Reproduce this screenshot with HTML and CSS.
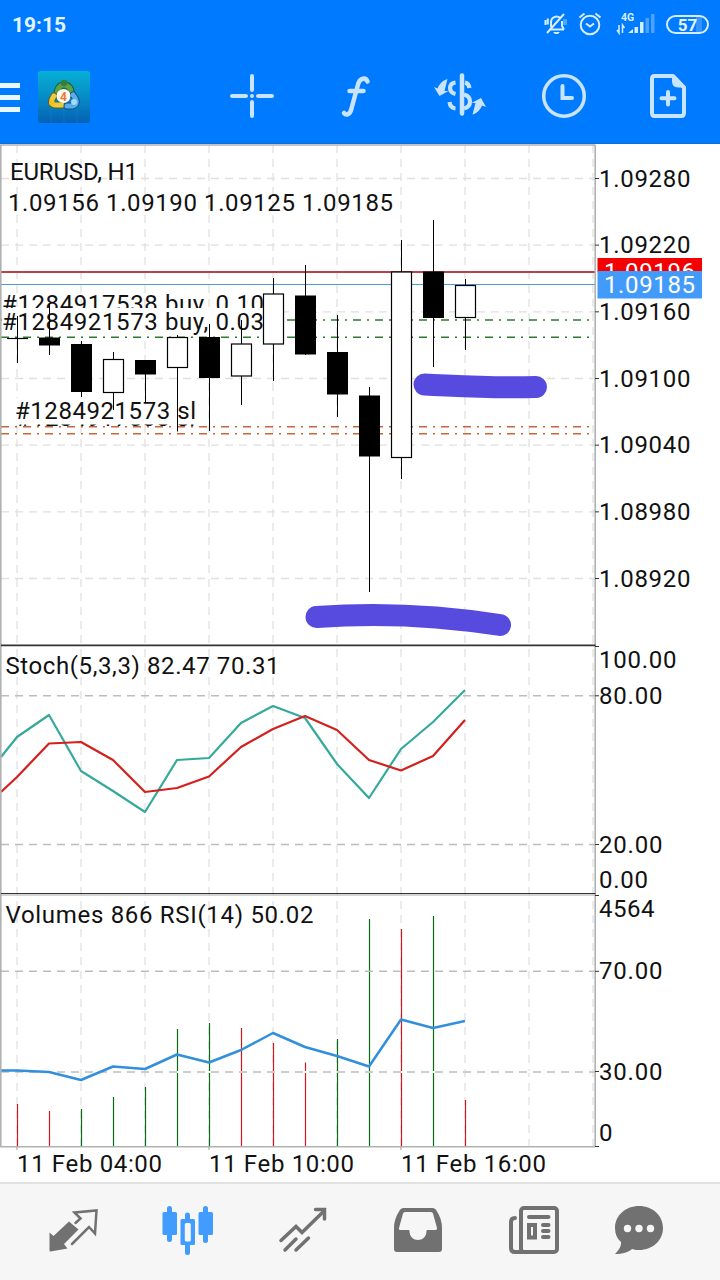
FILE: index.html
```html
<!DOCTYPE html>
<html lang="en">
  <head>
    <meta charset="utf-8">
    <title>EURUSD, H1</title>
    <link rel="stylesheet" href="styles.css">
  </head>
  <body>
    <div class="app">
      <header class="header">
        <div class="status-bar">
          <span class="time">19:15</span>
          <div class="status-icons">
            <svg class="bell" width="24" height="24" viewBox="0 0 24 24">
              <path d="M5 17.5h15M7 15V10a5.5 5.5 0 0 1 9-4.200M18 9v5l2 3.500M3 21L20 2M1.500 8v5M3.800 6.500v6"/>
              <path class="solid" d="M9 20h7l-2 2h-3z"/>
              <path class="faint" d="M19 7h4v6h-4z"/>
            </svg>
            <svg class="alarm" width="24" height="24" viewBox="0 0 24 24">
              <circle cx="12" cy="13" r="9.300"/>
              <path d="M8 11.500l4 3 4-3M1.500 5.500l5-4M22.500 5.500l-5-4"/>
            </svg>
            <svg class="signal" width="40" height="24" viewBox="0 0 40 24">
              <text x="5" y="9.300">4G</text>
              <path class="arrows" d="M3 13v8l-2-3M6.500 21v-8l2 3"/>
              <path class="solid" d="M12 21l5-4v4zM18.500 15h3.500v6h-3.500zM24 10h3.500v11h-3.500z"/>
              <path class="faint" d="M29.500 6h3.500v15h-3.500zM35 2h3.500v19h-3.500z"/>
            </svg>
            <span class="battery">57</span>
          </div>
        </div>

        <div class="toolbar">
          <div class="menu"><i></i><i></i><i></i></div>
          <svg class="logo" width="52" height="52" viewBox="0 0 52 52">
            <defs>
              <linearGradient id="tile" x1="0" y1="0" x2="0" y2="1">
                <stop offset="0" stop-color="#05b0d5"/>
                <stop offset="0.5" stop-color="#078bc6"/>
                <stop offset="1" stop-color="#0461b4"/>
              </linearGradient>
            </defs>
            <rect width="52" height="52" rx="3" fill="url(#tile)"/>
            <path d="M13 0v52M26 0v52M39 0v52M0 17h52M0 34h52" stroke="#2aa0d8" stroke-opacity=".2"/>
            <g fill="none" stroke-linecap="round">
              <path d="M19 24c0-7 3-10 7-10s7 3 8 10" stroke="#17612f" stroke-width="7"/>
              <path d="M19 24c0-7 3-10 7-10s7 3 8 10" stroke="#5ba04a" stroke-width="5"/>
              <path d="M16 25c-4 6-3 9 2 9h6" stroke="#695e1b" stroke-width="7"/>
              <path d="M16 25c-4 6-3 9 2 9h6" stroke="#e2cd43" stroke-width="5"/>
              <path d="M35 24c5 6 4 10-1 11h-5" stroke="#155287" stroke-width="7"/>
              <path d="M35 24c5 6 4 10-1 11h-5" stroke="#5aaee8" stroke-width="5"/>
            </g>
            <circle cx="26" cy="12" r="3.200" fill="#34803a"/>
            <circle cx="14" cy="32" r="2.800" fill="#f3c11d"/>
            <circle cx="36" cy="31" r="3" fill="#a3daf8"/>
            <circle cx="25.500" cy="25" r="7" fill="#fff6ed"/>
            <text x="25.500" y="29.500" text-anchor="middle">4</text>
          </svg>
          <div class="tools">
            <svg width="52" height="52" viewBox="0 0 52 52">
              <path d="M26 6v14M26 32v14M6 26h14M32 26h14" stroke-width="4"/>
              <circle class="solid" cx="26" cy="26" r="2"/>
            </svg>
            <svg width="52" height="52" viewBox="0 0 52 52">
              <path d="M38.500 11.500c-1.500-4-7.500-4.500-9.500 3l-6.500 24c-1.500 6.500-5.500 7-7.500 4.500M20.500 21h14" stroke-width="4.500"/>
            </svg>
            <svg width="56" height="52" viewBox="0 0 56 52">
              <path d="M30 5.500v38" stroke-width="4.500"/>
              <path d="M23.500 12.500c-7 1-7.500 9.500 0 11.500M17.500 32c.5 4 2.500 6.200 6 6.500M33 12.500c2.500.5 4 2.500 4.500 5.500M32 24.500c8 2 8 12 0 14" stroke-width="4.200" stroke-linecap="butt"/>
              <path class="solid" d="M15.500 9l-3 12h4l-9 5-5.500-9 3.500 1.500c1.500-4 5-8 10-9.500zM40.500 44.500l3-11.500h-4l9.500-5 5 9-4-1.500c-1.500 4-5 8-9.500 9z"/>
            </svg>
            <svg width="52" height="52" viewBox="0 0 52 52">
              <circle cx="25" cy="26" r="20.300" stroke-width="3.500"/>
              <path d="M23.500 16v12h9.500" stroke-width="4"/>
            </svg>
            <svg width="52" height="52" viewBox="0 0 52 52">
              <path d="M12.500 6h18.500l11 11.500v25.500q0 3-3 3h-26.500q-2.500 0-2.500-3V9q0-3 2.500-3z" stroke-width="4" stroke-linejoin="round"/>
              <path class="solid" d="M30 5v6q0 6.500 6 6.500h7z"/>
              <path d="M26 22v12.500M19.500 28.300h13" stroke-width="4"/>
            </svg>
          </div>
        </div>
      </header>

      <main class="chart">
        <svg id="chart" width="720" height="1038" viewBox="0 144 720 1038">
          <g id="grid"></g>

          <!-- price lines -->
          <path d="M1 272H595" stroke="#b94248" stroke-width="2"/>
          <path d="M1 284.500H595" stroke="#4b9bdc" stroke-width="1.200"/>
          <g class="orders">
            <path d="M1 320H595M1 337.300H595" stroke="#2c7a30"/>
            <path d="M1 426.800H595M1 433.700H595" stroke="#c4683c"/>
          </g>

          <g class="labels">
            <text x="2" y="311.500" textLength="262">#1284917538 buy, 0.10</text>
            <rect x="2" y="308" width="262" height="28"/>
            <text x="2" y="330" textLength="262">#1284921573 buy, 0.03</text>
            <text x="16" y="425.500" textLength="179">#1284917538 sl</text>
            <rect x="14" y="398" width="182" height="26.500"/>
            <text x="15" y="419" textLength="181">#1284921573 sl</text>
          </g>

          <g id="candles"></g>

          <!-- highlights -->
          <g class="marker">
            <path d="M424.500 384.500C460 386 490 388.500 536 387"/>
            <path d="M316.500 617C370 613 430 614 500 625"/>
          </g>

          <!-- oscillators -->
          <polyline class="line" stroke="#35a99c" points="1,757 17,737 49,715 81,771 113,791 145,812 177,760 209,758 241,723 273,706 305,718 337,764 369,798 401,749 433,722 465,690"/>
          <polyline class="line" stroke="#d3201c" points="1,792 17,777 49,743.5 81,742 113,760 145,792 177,788 209,776.5 241,747 273,729 305,716 337,730 369,760 401,770.5 433,756 465,720"/>
          <g id="volumes"></g>
          <path d="M170 1072H595" stroke="#fff" stroke-width="2"/>
          <path class="level" d="M1 695.800H595M1 844.500H595M1 971.300H595M1 1072H595"/>
          <polyline class="line rsi" points="1,1070.5 17,1070.5 49,1072 81,1080 113,1066.5 145,1069 177,1054.5 209,1062.5 241,1050 273,1033 305,1047 337,1056 369,1066.5 401,1019.5 433,1028 465,1021"/>

          <!-- frame -->
          <path d="M0 145H595.500M.8 145V1147M595.200 145V1147M0 1146.700H595" stroke="#b0b2b2" stroke-width="1.600" fill="none"/>
          <path d="M1 645.300H595.500" stroke="#333" stroke-width="1.800"/>
          <path d="M1 895H595" stroke="#aaa"/>
          <path d="M1 893.500H595.500" stroke="#333" stroke-width="1.200"/>
          <path d="M17 1147v3M209 1147v3M401 1147v3" stroke="#999"/>
          <path id="ticks" stroke="#333"/>

          <g id="prices"></g>
          <rect x="597.500" y="258" width="104.500" height="14" fill="#f40000"/>
          <svg x="597" y="258" width="106" height="13" viewBox="597 258 106 13">
            <text class="quote" x="604" y="280" textLength="91">1.09196</text>
          </svg>
          <rect x="597.500" y="271" width="104.500" height="27.500" fill="#429bfa"/>
          <text class="quote" x="604" y="292.500" textLength="91">1.09185</text>

          <text x="10" y="180" textLength="128">EURUSD, H1</text>
          <text x="8" y="211.300" textLength="385">1.09156 1.09190 1.09125 1.09185</text>
          <text x="5.500" y="674" textLength="274">Stoch(5,3,3) 82.47 70.31</text>
          <text x="5.500" y="923.300" textLength="308">Volumes 866 RSI(14) 50.02</text>
          <text x="17" y="1171.700" textLength="145">11 Feb 04:00</text>
          <text x="209" y="1171.700" textLength="145">11 Feb 10:00</text>
          <text x="401" y="1171.700" textLength="145">11 Feb 16:00</text>
        </svg>
      </main>

      <nav class="bottom-nav">
        <svg width="56" height="56" viewBox="0 0 56 56">
          <path class="solid" d="M4.500 30.500l4 3.500 15.500-14.500 9.500 8-14.500 14.500 3.500 4.500-17 3q-1 0-1-1z"/>
          <path d="M30.500 21l5-4.500-6-6 22-2-1.500 23-6-6.500-17 17" stroke-width="2.500"/>
        </svg>
        <svg class="active" width="56" height="56" viewBox="0 0 56 56">
          <path d="M9.500 6.500v31M27.500 13v37.500M45.500 6.500v32" stroke-width="5"/>
          <rect class="solid" x="2.500" y="10" width="14.500" height="23" rx="1.500"/>
          <rect class="solid" x="38.500" y="10" width="14.500" height="23" rx="1.500"/>
          <rect class="solid" x="20.500" y="17" width="14.500" height="26" rx="1.500"/>
          <rect x="24.800" y="21" width="6" height="18.500" rx="1.500" fill="#f6f6f6" stroke="none"/>
        </svg>
        <svg width="56" height="56" viewBox="0 0 56 56">
          <path d="M6 38.500l15-14 6 6L49 9M10 48l11-11M21 48l12.500-12" stroke-width="3.500"/>
          <path d="M40.500 7.500H49.500v9.500" stroke-width="3.500"/>
        </svg>
        <svg width="56" height="56" viewBox="0 0 56 56">
          <path class="solid" fill-rule="evenodd" d="M13.500 6h29q3 0 4.500 3.500Q52 17 52 26v21q0 3-3 3H7q-3 0-3-3V26Q4 17 9 9.500 10.500 6 13.500 6zM15 10q-1.500 0-2 1.500L9 26q-.5 2 1 2H18.500c.5 0 1 0 1 1 0 12 17 12 17 0 0-1 .5-1 1-1H45.500q2 0 1.500-2L43 11.500q-.5-1.500-2-1.500z"/>
        </svg>
        <svg width="56" height="56" viewBox="0 0 56 56">
          <g transform="translate(1 0)">
            <rect x="15" y="6" width="36" height="44" rx="3" stroke-width="4"/>
            <path d="M9 16q-4 0-4 4v26q0 4 4 4h8" stroke-width="4"/>
            <path d="M23 15h19.500M37 23h5.500M37 29h5.500M37 35h5.500" stroke-width="4"/>
            <rect x="23" y="23" width="6" height="12.500" stroke-width="4"/>
          </g>
        </svg>
        <svg width="56" height="56" viewBox="0 0 56 56">
          <path class="solid" d="M28 4C15 4 4 13 4 26c0 6 2 10.500 6 14 .5 4-2 8-6 12 8 0 13-1.500 17-5 3 1 5 1 7 1 14 0 24-10 24-22S42 4 28 4z"/>
          <g fill="#f6f6f6" stroke="none">
            <circle cx="16.500" cy="26.500" r="3.700"/><circle cx="28" cy="26.500" r="3.700"/><circle cx="39.500" cy="26.500" r="3.700"/>
          </g>
        </svg>
      </nav>
    </div>
    <script src="chart.js"></script>
  </body>
</html>
```

FILE: styles.css
```css
* {
  box-sizing: border-box;
}

body {
  margin: 0;
  background: #fff;
  font-family: Roboto, sans-serif;
}

svg {
  display: block;
  flex: none;
}

.app {
  display: flex;
  flex-direction: column;
  width: 720px;
  height: 1280px;
  overflow: hidden;
}

/* header */
.header {
  height: 144px;
  background: #007aff;
  border-bottom: 1px solid #0d6fd6;
  color: #e3f3ff;
}

.status-bar {
  display: flex;
  justify-content: space-between;
  align-items: center;
  height: 48px;
  padding: 0 11px 0 12px;
}

.time {
  font-size: 21px;
  font-weight: 700;
  padding-top: 2px;
}

.status-icons {
  display: flex;
  align-items: center;
  gap: 10px;
}

.status-icons svg {
  fill: none;
  stroke: #d5edff;
  stroke-width: 2;
}

.status-icons .solid {
  fill: #d5edff;
  stroke: none;
}

.status-icons .faint {
  fill: #4ca2ff;
  stroke: none;
}

.signal {
  margin-left: 4px;
}

.status-icons .arrows {
  stroke-width: 1.5;
}

.signal text {
  fill: #d5edff;
  stroke: none;
  font-size: 10.5px;
  font-weight: 700;
}

.battery {
  width: 43px;
  height: 19px;
  border: 2px solid #d5edff;
  border-radius: 10px;
  background: linear-gradient(to right, transparent 72%, #3395ff 72%, #3395ff 88%, transparent 88%);
  font-size: 17px;
  font-weight: 700;
  line-height: 16px;
  text-align: center;
}

.toolbar {
  display: flex;
  align-items: center;
  height: 96px;
}

.menu {
  display: flex;
  flex-direction: column;
  gap: 7px;
  width: 20px;
  margin: 3px 18px 0 0;
}

.menu i {
  height: 5px;
  background: #e9f8ff;
}

.logo {
  margin-top: 2px;
}

.logo text {
  fill: #e6793b;
  font-size: 12px;
  font-weight: 700;
}

.tools {
  display: flex;
  flex: 1;
  justify-content: space-between;
  padding: 0 26px 0 136px;
}

.tools svg {
  fill: none;
  stroke: #c9e4ff;
  stroke-linecap: round;
}

.tools .solid {
  fill: #c9e4ff;
  stroke: none;
}

/* chart */
.chart {
  height: 1038px;
}

.chart text {
  font-size: 24px;
  fill: #111;
}

.chart .quote {
  fill: #fff;
}

.grid-line {
  stroke: #e0e0e0;
  stroke-width: 1.3;
  stroke-dasharray: 8 6;
}

.level {
  stroke: #bdbdbd;
  stroke-width: 1.4;
  stroke-dasharray: 8 6;
}

.orders {
  stroke-width: 1.5;
  stroke-dasharray: 8 6 2 6;
}

.labels rect {
  fill: #fff;
}

.wick {
  stroke: #000;
}

.up {
  fill: #fff;
  stroke: #000;
  stroke-width: 1.2;
}

.down {
  fill: #000;
  stroke: #000;
}

.marker {
  fill: none;
  stroke: #574bdf;
  stroke-width: 22;
  stroke-linecap: round;
}

.line {
  fill: none;
  stroke-width: 2.2;
  stroke-linejoin: round;
}

.rsi {
  stroke: #318fdc;
  stroke-width: 2.5;
}

.vol-up {
  stroke: #0a6b10;
  stroke-width: 1.2;
}

.vol-down {
  stroke: #cc1a1e;
  stroke-width: 1.2;
}

/* bottom navigation */
.bottom-nav {
  display: flex;
  gap: 59px;
  height: 98px;
  padding: 18px 0 0 45px;
  border-top: 2px solid #e2e2e2;
  background: #f6f6f6;
}

.bottom-nav svg {
  fill: none;
  stroke: #717171;
  stroke-linecap: round;
}

.bottom-nav svg:last-child {
  margin-left: -9px;
}

.bottom-nav .solid {
  fill: #717171;
  stroke: none;
}

.bottom-nav .active {
  stroke: #429bff;
}

.bottom-nav .active .solid {
  fill: #429bff;
}
```

FILE: chart.js
```js
const NS = 'http://www.w3.org/2000/svg'

function add(parent, tag, attrs, text) {
  const el = document.createElementNS(NS, tag)
  for (const key in attrs) el.setAttribute(key, attrs[key])
  if (text) el.textContent = text
  document.getElementById(parent).appendChild(el)
}

// high, body top, body bottom, low, direction
const candles = [
  [316, 338.4, 338.6, 363, 'down'],
  [304, 338, 345, 355, 'down'],
  [341, 344.5, 391.5, 397, 'down'],
  [352, 359.5, 392.5, 410, 'up'],
  [360, 360.5, 374, 403, 'down'],
  [335, 337.5, 367.5, 431.5, 'up'],
  [324, 337.5, 377.5, 431, 'down'],
  [320, 344, 376, 405, 'up'],
  [278, 294, 344, 381, 'up'],
  [265, 296, 354, 355, 'down'],
  [315, 352.5, 394, 417, 'down'],
  [387, 396, 456, 592, 'down'],
  [240, 272, 457.5, 479, 'up'],
  [220, 272, 317.5, 367, 'down'],
  [279, 285.5, 317.5, 350, 'up']
]

candles.forEach(([high, top, bottom, low, dir], i) => {
  const x = 17.5 + i * 32
  add('candles', 'path', { class: 'wick', d: `M${x} ${high}V${low}` })
  add('candles', 'rect', { class: dir, x: x - 10, y: top, width: 20, height: bottom - top })
})

const volumes = [
  [1104, 'down'], [1111, 'down'], [1109, 'up'], [1097, 'up'], [1087, 'up'],
  [1029, 'up'], [1023, 'up'], [1028, 'down'], [1043, 'down'], [1062.5, 'down'],
  [1039, 'up'], [919, 'up'], [929, 'down'], [916, 'up'], [1100, 'down']
]

volumes.forEach(([top, dir], i) => {
  add('volumes', 'path', { class: 'vol-' + dir, d: `M${17.5 + i * 32} ${top}V1146` })
})

// grid
for (let x = 17; x < 600; x += 64) {
  add('grid', 'path', { class: 'grid-line', d: `M${x} 145V1146` })
}

// price scale
const prices = ['1.09280', '1.09220', '1.09160', '1.09100', '1.09040', '1.08980', '1.08920']
let ticks = 'M595 646.5h4M595 695.800h4M595 844.500h4M595 895.500h4M595 971.300h4M595 1071.500h4M595 1146.500h4'

prices.forEach((price, i) => {
  const y = 178.5 + i * 66.67
  add('grid', 'path', { class: 'grid-line', d: `M1 ${y}H595` })
  add('prices', 'text', { x: 599, y: y + 8, textLength: 91.5 }, price)
  ticks += `M595 ${y}h4`
})
document.getElementById('ticks').setAttribute('d', ticks)

const scale = [
  [668, '100.00', 77.5], [704, '80.00', 63.5], [852.5, '20.00', 63.5], [888, '0.00', 49],
  [917, '4564', 55.5], [979, '70.00', 63.5], [1080, '30.00', 63.5], [1141, '0', 14]
]
scale.forEach(([y, label, width]) => {
  add('prices', 'text', { x: 599, y: y, textLength: width }, label)
})
```
